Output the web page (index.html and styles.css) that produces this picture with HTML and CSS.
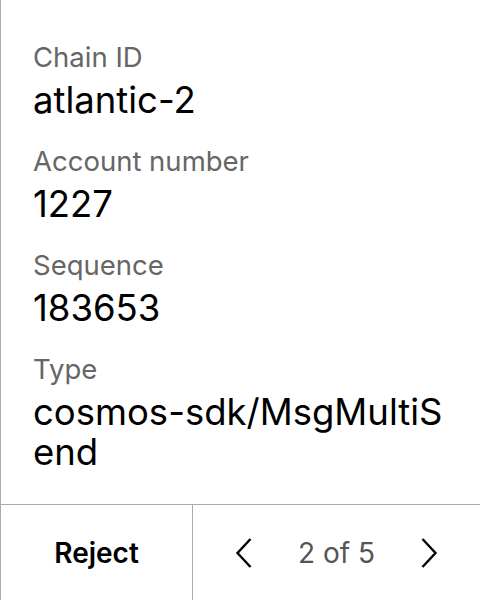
FILE: index.html
```html
<!DOCTYPE html>
<html>
<head>
<meta charset="utf-8">
<link rel="stylesheet" href="styles.css">
</head>
<body>
<div class="panel">
  <div class="content">
    <div class="field">
      <div class="label">Chain ID</div>
      <div class="value">atlantic-2</div>
    </div>
    <div class="field">
      <div class="label">Account number</div>
      <div class="value">1227</div>
    </div>
    <div class="field">
      <div class="label">Sequence</div>
      <div class="value">183653</div>
    </div>
    <div class="field">
      <div class="label">Type</div>
      <div class="value">cosmos-sdk/MsgMultiSend</div>
    </div>
  </div>
  <div class="footer">
    <div class="reject">Reject</div>
    <div class="pager">
      <svg class="chev" width="17" height="30" viewBox="0 0 17 30"><path d="M15.5 1 L2.5 15 L15.5 29" fill="none" stroke="#000" stroke-width="2.4"/></svg>
      <span class="count">2 of 5</span>
      <svg class="chev" width="17" height="30" viewBox="0 0 17 30"><path d="M1.5 1 L14.5 15 L1.5 29" fill="none" stroke="#000" stroke-width="2.4"/></svg>
    </div>
  </div>
</div>
</body>
</html>
```
FILE: styles.css
```css
html, body { margin: 0; padding: 0; background: #fff; }
body { font-family: Inter, "Noto Sans", sans-serif; color: #000; }
.panel {
  width: 480px; height: 600px; box-sizing: border-box;
  border-left: 1px solid #aaa;
  display: flex; flex-direction: column;
}
.content { flex: 1; padding: 40px 32px 0 32px; display: flex; flex-direction: column; gap: 24px; }
.field { display: flex; flex-direction: column; gap: 6px; }
.label { font-size: 27.5px; line-height: 34px; color: #666; }
.value { font-size: 36.5px; line-height: 40px; word-break: break-all; }
.footer { height: 96px; flex: none; box-sizing: border-box; border-top: 1px solid #aaa; display: flex; }
.reject { width: 191px; border-right: 1px solid #aaa; display: flex; align-items: center; justify-content: center; font-size: 28px; font-weight: 600; }
.pager { flex: 1; display: flex; align-items: center; justify-content: space-between; padding: 0 42px; }
.count { font-size: 28px; color: #555; }
.chev { display: block; }
```
